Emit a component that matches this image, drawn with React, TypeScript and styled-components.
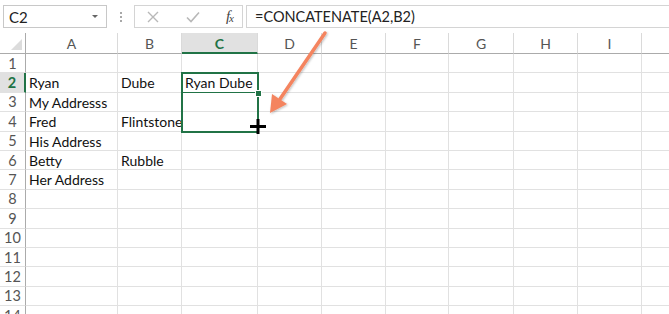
import React from 'react';
import styled, { createGlobalStyle } from 'styled-components';

const GlobalStyle = createGlobalStyle`
  html, body {
    margin: 0;
    padding: 0;
    background: #ffffff;
    overflow: hidden;
  }
  body {
    font-family: Lato, "Open Sans", sans-serif;
  }
`;

const GREEN = '#217346';
const COLS = [92, 64, 76, 64, 64, 63, 65, 64, 64, 64];
const LETTERS = ['A', 'B', 'C', 'D', 'E', 'F', 'G', 'H', 'I', 'J'];
const ROW_H = 19.4;
const HEAD_W = 26;
const HEAD_H = 21;

const data: Record<string, string> = {
  A2: 'Ryan',
  B2: 'Dube',
  C2: 'Ryan Dube',
  A3: 'My Addresss',
  A4: 'Fred',
  B4: 'Flintstone',
  A5: 'His Address',
  A6: 'Betty',
  B6: 'Rubble',
  A7: 'Her Address',
};

const Page = styled.div`
  width: 669px;
  height: 314px;
  position: relative;
  overflow: hidden;
  background: #fff;
`;

const FormulaBar = styled.div`
  display: flex;
  align-items: center;
  height: 23px;
  padding: 5px 0 0 3px;
`;

const NameBox = styled.div`
  box-sizing: border-box;
  width: 104px;
  height: 23px;
  border: 1px solid #c8c8c8;
  display: flex;
  align-items: center;
  justify-content: space-between;
  padding: 0 8px 0 5px;
  font-size: 15px;
  color: #222;
`;

const DropCaret = styled.span`
  width: 0;
  height: 0;
  border-left: 3px solid transparent;
  border-right: 3px solid transparent;
  border-top: 3px solid #666;
`;

const Grip = styled.div`
  width: 28px;
  display: flex;
  flex-direction: column;
  align-items: center;
  gap: 2px;

  span {
    width: 2px;
    height: 2px;
    background: #a8a8a8;
  }
`;

const ButtonBox = styled.div`
  box-sizing: border-box;
  width: 109px;
  height: 23px;
  border: 1px solid #d4d4d4;
  display: flex;
  align-items: center;
  justify-content: space-between;
  padding: 0 9px 0 11px;
  margin-left: -1px;
`;

const Fx = styled.span`
  font-family: "Liberation Serif", serif;
  font-style: italic;
  font-size: 15px;
  color: #444;
  letter-spacing: -1px;

  sub {
    font-size: 11px;
    vertical-align: -1px;
  }
`;

const FormulaInput = styled.div`
  box-sizing: border-box;
  flex: 1;
  height: 23px;
  margin-left: 3px;
  border: 1px solid #d4d4d4;
  border-right: none;
  display: flex;
  align-items: center;
  padding-left: 8px;
  font-size: 14.5px;
  color: #222;
`;

const Sheet = styled.div`
  position: absolute;
  left: 0;
  top: 33px;
  display: grid;
  grid-template-columns: ${HEAD_W}px ${COLS.map((c) => `${c}px`).join(' ')};
  grid-template-rows: ${HEAD_H}px;
  grid-auto-rows: ${ROW_H}px;
`;

const Corner = styled.div`
  position: relative;
  border-right: 1px solid #ababab;
  border-bottom: 1px solid #ababab;

  &::after {
    content: '';
    position: absolute;
    right: 3px;
    bottom: 3px;
    width: 0;
    height: 0;
    border-left: 11px solid transparent;
    border-bottom: 11px solid #dcdcdc;
  }
`;

const ColHead = styled.div<{ $active?: boolean }>`
  display: flex;
  align-items: center;
  justify-content: center;
  font-size: 14px;
  color: ${(p) => (p.$active ? GREEN : '#555')};
  font-weight: ${(p) => (p.$active ? 700 : 400)};
  background: ${(p) => (p.$active ? '#e1e1e1' : '#fff')};
  border-right: 1px solid #dadada;
  border-bottom: ${(p) => (p.$active ? `2px solid ${GREEN}` : '1px solid #ababab')};
  padding-top: ${(p) => (p.$active ? '1px' : '0')};
`;

const RowHead = styled.div<{ $active?: boolean }>`
  display: flex;
  align-items: center;
  justify-content: center;
  font-size: 14.5px;
  color: ${(p) => (p.$active ? GREEN : '#555')};
  font-weight: ${(p) => (p.$active ? 700 : 400)};
  background: ${(p) => (p.$active ? '#e1e1e1' : '#fff')};
  border-right: ${(p) => (p.$active ? `2px solid ${GREEN}` : '1px solid #ababab')};
  border-bottom: 1px solid #e1e1e1;
`;

const Cell = styled.div`
  box-sizing: border-box;
  border-right: 1px solid #e1e1e1;
  border-bottom: 1px solid #e1e1e1;
  font-size: 14px;
  color: #111;
  padding-left: 3px;
  line-height: 19px;
  white-space: nowrap;
  overflow: visible;
`;

const Selection = styled.div`
  position: absolute;
  box-sizing: border-box;
  border: 2px solid ${GREEN};
  pointer-events: none;
`;

const ActiveLine = styled.div`
  position: absolute;
  left: 0;
  right: 0;
  height: 1px;
  background: ${GREEN};
`;

const FillHandle = styled.div`
  position: absolute;
  width: 5px;
  height: 5px;
  background: ${GREEN};
  border: 1px solid #fff;
`;

const Overlay = styled.svg`
  position: absolute;
  left: 0;
  top: 0;
  pointer-events: none;
`;

const colLeft = (i: number) => HEAD_W + COLS.slice(0, i).reduce((a, b) => a + b, 0);
const rowTop = (r: number) => 33 + HEAD_H + (r - 1) * ROW_H;

export default function App() {
  const rows = Array.from({ length: 14 }, (_, i) => i + 1);
  const selLeft = colLeft(2);
  const selTop = rowTop(2);
  const selW = COLS[2] + 1;
  const selH = ROW_H * 3 + 1;

  return (
    <Page>
      <GlobalStyle />
      <FormulaBar>
        <NameBox>
          C2
          <DropCaret />
        </NameBox>
        <Grip>
          <span />
          <span />
          <span />
        </Grip>
        <ButtonBox>
          <svg width="14" height="14" viewBox="0 0 14 14">
            <path d="M2 2 L12 12 M12 2 L2 12" stroke="#b8b8b8" strokeWidth="1.4" fill="none" />
          </svg>
          <svg width="16" height="14" viewBox="0 0 16 14">
            <path d="M2 7.5 L6 11.5 L14 2.5" stroke="#b8b8b8" strokeWidth="1.6" fill="none" />
          </svg>
          <Fx>
            f<sub>x</sub>
          </Fx>
        </ButtonBox>
        <FormulaInput>=CONCATENATE(A2,B2)</FormulaInput>
      </FormulaBar>

      <Sheet>
        <Corner />
        {LETTERS.map((l) => (
          <ColHead key={l} $active={l === 'C'}>
            {/* J sits past the window edge, its label is not visible */}
            {l === 'J' ? '' : l}
          </ColHead>
        ))}
        {rows.map((r) => (
          <React.Fragment key={r}>
            <RowHead $active={r === 2}>{r}</RowHead>
            {LETTERS.map((l) => (
              <Cell key={l}>{data[`${l}${r}`] ?? ''}</Cell>
            ))}
          </React.Fragment>
        ))}
      </Sheet>

      <Selection
        style={{ left: selLeft - 1, top: selTop - 1, width: selW + 1, height: selH + 1 }}
      >
        <ActiveLine style={{ top: ROW_H - 2 }} />
      </Selection>
      <FillHandle style={{ left: selLeft + selW - 4, top: selTop + ROW_H - 3 }} />

      <Overlay width="669" height="314" viewBox="0 0 669 314">
        <defs>
          <filter id="shadow" x="-20%" y="-20%" width="140%" height="140%">
            <feDropShadow dx="1" dy="1" stdDeviation="1" floodColor="#000" floodOpacity="0.25" />
          </filter>
        </defs>
        <g filter="url(#shadow)">
          <line x1="325" y1="33" x2="280" y2="99" stroke="#f4845f" strokeWidth="3.5" strokeLinecap="round" />
          <polygon points="270,113 272,94 287,104" fill="#f4845f" />
        </g>
        {/* fill cursor */}
        <path d="M258 119 V134 M250 126.5 H266" stroke="#000" strokeWidth="3" fill="none" />
      </Overlay>
    </Page>
  );
}
